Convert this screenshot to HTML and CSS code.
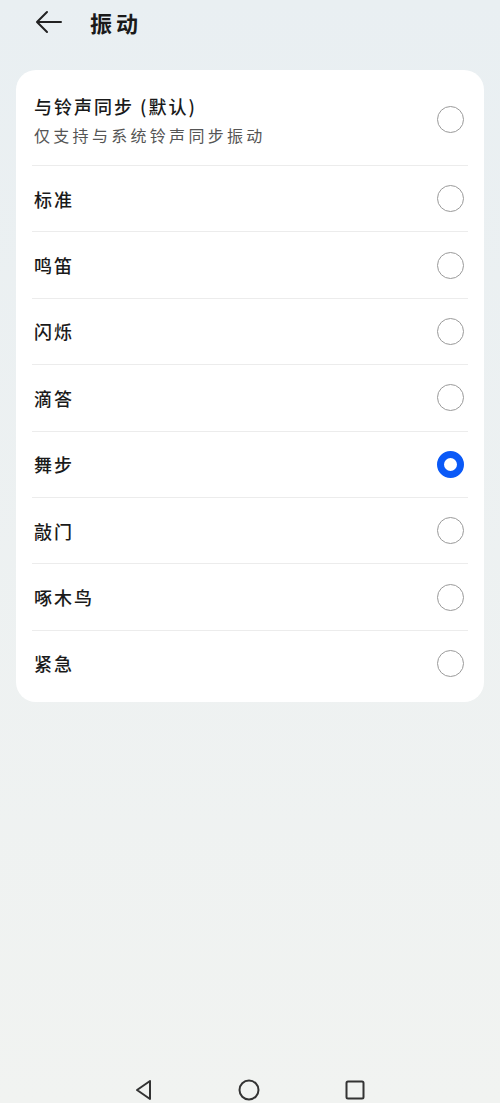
FILE: index.html
```html
<!DOCTYPE html>
<html lang="zh-CN">

<head>
    <meta charset="UTF-8">
    <meta name="viewport" content="width=device-width, initial-scale=1.0">
    <title>振动</title>
    <link rel="stylesheet" href="styles.css">
</head>

<body>
    <div class="page">
        <!-- Title bar -->
        <header class="title-bar">
            <svg class="back" width="28" height="24" viewBox="0 0 28 24">
                <path d="M26 12H3M12 2L2 12L12 22" fill="none" stroke="#222" stroke-width="2" stroke-linecap="round" stroke-linejoin="round" />
            </svg>
            <h1 class="title">振动</h1>
        </header>

        <!-- Options -->
        <ul class="card">
            <li class="row row-tall">
                <div class="text">
                    <span class="label">与铃声同步 (默认)</span>
                    <span class="sub">仅支持与系统铃声同步振动</span>
                </div>
                <span class="radio"></span>
            </li>
            <li class="row"><span class="label">标准</span><span class="radio"></span></li>
            <li class="row"><span class="label">鸣笛</span><span class="radio"></span></li>
            <li class="row"><span class="label">闪烁</span><span class="radio"></span></li>
            <li class="row"><span class="label">滴答</span><span class="radio"></span></li>
            <li class="row"><span class="label">舞步</span><span class="radio checked"></span></li>
            <li class="row"><span class="label">敲门</span><span class="radio"></span></li>
            <li class="row"><span class="label">啄木鸟</span><span class="radio"></span></li>
            <li class="row"><span class="label">紧急</span><span class="radio"></span></li>
        </ul>

        <!-- Navigation bar -->
        <nav class="nav-bar">
            <svg width="22" height="24" viewBox="0 0 22 24">
                <path d="M17 3L4 12L17 21Z" fill="none" stroke="#333" stroke-width="2" stroke-linejoin="round" />
            </svg>
            <svg width="24" height="24" viewBox="0 0 24 24">
                <circle cx="12" cy="12" r="9.5" fill="none" stroke="#333" stroke-width="2" />
            </svg>
            <svg width="24" height="24" viewBox="0 0 24 24">
                <rect x="3.5" y="3.5" width="17" height="17" rx="1.5" fill="none" stroke="#333" stroke-width="2" />
            </svg>
        </nav>
    </div>
</body>

</html>
```

FILE: styles.css
```css
* {
    box-sizing: border-box;
}

body {
    margin: 0;
    font-family: "Noto Sans CJK SC", "Noto Sans", sans-serif;
    color: #1a1a1a;
    background: linear-gradient(#e9eff2, #f1f3f1);
}

.page {
    min-height: 100vh;
    display: flex;
    flex-direction: column;
}

.title-bar {
    height: 44px;
    display: flex;
    align-items: center;
    padding-left: 35px;
    margin-bottom: 26px;
}

.title {
    margin: 0 0 0 27px;
    font-size: 22px;
    font-weight: 700;
    letter-spacing: 4px;
    line-height: 1;
}

.card {
    list-style: none;
    margin: 0 16px;
    padding: 4px 16px 6px;
    background-color: #ffffff;
    border-radius: 20px;
}

.row {
    height: 66.4px;
    display: flex;
    align-items: center;
    justify-content: space-between;
    padding-left: 2px;
    padding-right: 4px;
    border-top: 1px solid #ececec;
}

.row-tall {
    height: 91px;
    border-top: none;
}

.text {
    display: flex;
    flex-direction: column;
    gap: 6px;
}

.label {
    font-size: 18px;
    font-weight: 500;
    letter-spacing: 2px;
    line-height: 24px;
}

.sub {
    font-size: 16px;
    color: #555;
    letter-spacing: 3.3px;
    line-height: 22px;
}

.radio {
    width: 27px;
    height: 27px;
    border-radius: 50%;
    border: 1.5px solid #9a9a9a;
    flex-shrink: 0;
}

.radio.checked {
    border: 7px solid #0a59f7;
}

.nav-bar {
    margin-top: auto;
    height: 50px;
    display: flex;
    align-items: center;
    justify-content: center;
    gap: 82px;
    padding-top: 24px;
}
```
